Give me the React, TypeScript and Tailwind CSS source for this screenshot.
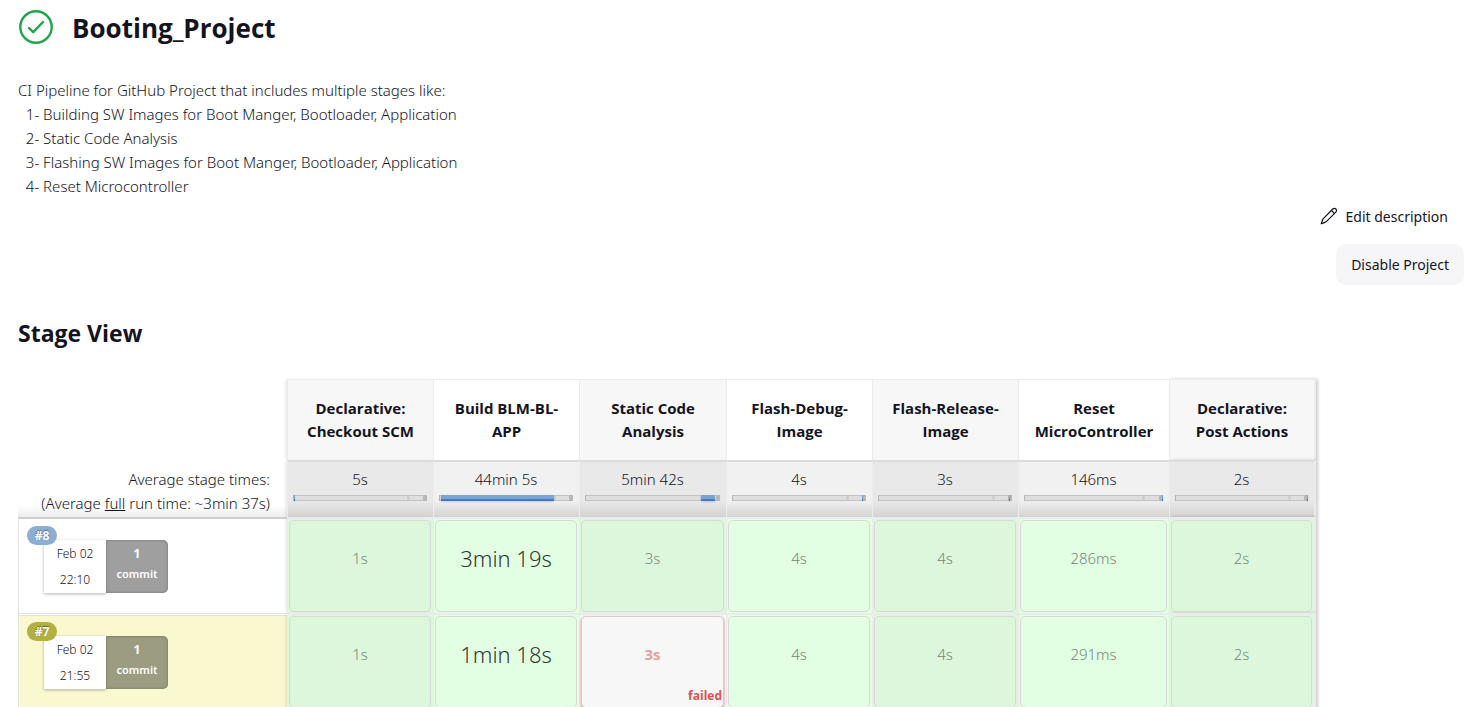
type Bar = { start: number; width: number };
type Stage = { name: [string, string]; width: string; avg: string; bar: Bar };
type Cell = { time: string; kind: 'ok' | 'long' | 'failed' };
type Run = { id: string; date: string; time: string; unstable: boolean; cells: Cell[] };

const stages: Stage[] = [
  { name: ['Declarative:', 'Checkout SCM'], width: 'w-[146px]', avg: '5s', bar: { start: 0, width: 0.8 } },
  { name: ['Build BLM-BL-', 'APP'], width: 'w-[146px]', avg: '44min 5s', bar: { start: 0.5, width: 85 } },
  { name: ['Static Code', 'Analysis'], width: 'w-[147px]', avg: '5min 42s', bar: { start: 86, width: 10.5 } },
  { name: ['Flash-Debug-', 'Image'], width: 'w-[146px]', avg: '4s', bar: { start: 97, width: 0.8 } },
  { name: ['Flash-Release-', 'Image'], width: 'w-[146px]', avg: '3s', bar: { start: 98, width: 0.8 } },
  { name: ['Reset', 'MicroController'], width: 'w-[151px]', avg: '146ms', bar: { start: 99, width: 0.8 } },
  { name: ['Declarative:', 'Post Actions'], width: 'w-[147px]', avg: '2s', bar: { start: 99, width: 0.8 } },
];

const runs: Run[] = [
  {
    id: '#8', date: 'Feb 02', time: '22:10', unstable: false,
    cells: [
      { time: '1s', kind: 'ok' }, { time: '3min 19s', kind: 'long' }, { time: '3s', kind: 'ok' }, { time: '4s', kind: 'ok' },
      { time: '4s', kind: 'ok' }, { time: '286ms', kind: 'ok' }, { time: '2s', kind: 'ok' },
    ],
  },
  {
    id: '#7', date: 'Feb 02', time: '21:55', unstable: true,
    cells: [
      { time: '1s', kind: 'ok' }, { time: '1min 18s', kind: 'long' }, { time: '3s', kind: 'failed' }, { time: '4s', kind: 'ok' },
      { time: '4s', kind: 'ok' }, { time: '291ms', kind: 'ok' }, { time: '2s', kind: 'ok' },
    ],
  },
];

const edge = (i: number) =>
  i === 0
    ? 'shadow-[-2px_0_3px_-1px_rgba(0,0,0,0.12)]'
    : i === stages.length - 1
      ? 'border-r-2 border-r-[#ececec] shadow-[2px_0_3px_rgba(0,0,0,0.2)]'
      : '';

function StageBar({ bar }: { bar: Bar }) {
  return (
    <div className="relative flex h-1.5 w-full border-l border-[#b4b4b4] bg-[#b8b8b8]">
      <div className="w-[85%] border-y border-[#c2c2c2] bg-[#dedede]" />
      <div className="w-[2%] border-y border-[#c2c2c2] bg-[#d0d0d0]" />
      <div className="w-[10%] border-y border-[#c2c2c2] bg-[#dedede]" />
      <div
        className="absolute inset-y-0 min-w-px bg-linear-to-b from-[#7ba5d6] from-60% to-[#4478c8] to-70% shadow-[0_1px_2px_rgba(0,0,0,0.15)]"
        style={{ left: `${bar.start}%`, width: `${bar.width}%` }}
      />
    </div>
  );
}

function StageCell({ cell, shaded, index }: { cell: Cell; shaded: boolean; index: number }) {
  const failed = cell.kind === 'failed';
  const bg = failed ? 'bg-[#f7f7f7]' : shaded ? 'bg-[#ddf7dc]' : 'bg-[#e3ffe3]';
  return (
    <td className={`h-24 border-l border-t-2 border-[#ebebeb] p-0 ${bg} ${edge(index)}`}>
      <div
        className={`relative my-px ml-px mr-0.5 flex h-[92px] items-center justify-center rounded-[5px] border pb-4 ${
          failed ? 'border-[#d9c9c9] shadow-[0_1px_2px_rgba(217,50,50,0.8)]' : 'border-[#d8d8d8]'
        }`}
      >
        {cell.kind === 'long' && <span className="text-[22px] text-[#2f3a35]">{cell.time}</span>}
        {cell.kind === 'ok' && <span className="text-[15px] text-[#75877a]">{cell.time}</span>}
        {failed && (
          <>
            <span className="text-[15px] font-bold text-[#e8a09d]">{cell.time}</span>
            <span className="absolute bottom-0.5 right-px font-['Open_Sans',sans-serif] text-[12px] font-bold leading-[18px] text-[#d9534f]">failed</span>
          </>
        )}
      </div>
    </td>
  );
}

function RunLabel({ run }: { run: Run }) {
  return (
    <th
      scope="row"
      className={`border-l p-0 align-top font-light ${
        run.unstable
          ? 'border-t-[3px] border-double border-[#e2e2e2] bg-[#faf8cf] bg-clip-padding'
          : 'border-t-2 border-[#e2e2e2] border-t-[#cfcfcf] bg-white'
      }`}
    >
      <div className={`relative pl-[25px] ${run.unstable ? 'pt-5' : 'pt-[21px]'}`}>
        <a
          href="#run"
          className={`absolute left-2 flex h-[19px] w-[30px] items-center justify-center rounded-full text-[12px] font-bold text-white [text-shadow:0_-1px_1px_rgba(0,0,0,0.4)] ${
            run.unstable ? 'top-1.5 bg-[#b1b040]' : 'top-[7px] bg-[#8bafd4]'
          }`}
        >
          {run.id}
        </a>
        <div className="flex h-[53px]">
          <div className="flex w-[62px] flex-col items-center justify-center gap-1.5 bg-white text-[12px] leading-5 text-[#14141f] shadow-[0_1px_3px_rgba(0,0,0,0.3)]">
            <span>{run.date}</span>
            <span>{run.time}</span>
          </div>
          <div
            className={`flex w-[62px] flex-col items-center rounded-r-[5px] pt-1 text-[12px] font-semibold leading-5 text-white shadow-[inset_0_0_3px_rgba(0,0,0,0.3)] ${
              run.unstable ? 'bg-[#9c9c80]' : 'bg-[#9f9f9f]'
            }`}
          >
            <span className="font-bold">1</span>
            <span className="text-[11px]">commit</span>
          </div>
        </div>
      </div>
    </th>
  );
}

export default function App() {
  return (
    <main className="h-screen overflow-hidden bg-white pl-[18px] pr-[9px] font-['Noto_Sans','Open_Sans',sans-serif] text-[15px] font-light text-[#14141f]">
      <header className="flex items-start gap-[18px] pt-[9px]">
        <svg viewBox="0 0 36 36" className="size-9" fill="none" stroke="#1ea64b" strokeLinecap="round" strokeLinejoin="round" role="img" aria-label="Success">
          <circle cx="18" cy="18" r="15.7" strokeWidth="2.4" />
          <path d="M11 19l4.2 4.2L25 13" strokeWidth="2.4" />
        </svg>
        <h1 className="font-['Open_Sans',sans-serif] text-[26px] font-bold leading-[38px]">Booting_Project</h1>
      </header>

      <p className="whitespace-pre-wrap pt-[31px] leading-[24px]">
        {`CI Pipeline for GitHub Project that includes multiple stages like:
  1- Building SW Images for Boot Manger, Bootloader, Application
  2- Static Code Analysis
  3- Flashing SW Images for Boot Manger, Bootloader, Application
  4- Reset Microcontroller`}
      </p>

      <div className="flex flex-col items-end gap-2.5 text-[14px] font-normal">
        <a href="#edit" className="flex h-9 items-center gap-2 pr-4">
          <svg viewBox="0 0 512 512" className="size-[18px]" fill="none" stroke="currentColor" strokeLinecap="round" strokeLinejoin="round" strokeWidth="34" aria-hidden="true">
            <path d="M364 58c24-24 62-24 86 0s24 62 0 86L172 422C130 452 80 458 34 478c20-46 26-96 54-140z" />
            <path d="M324 98l86 86" />
          </svg>
          Edit description
        </a>
        <button type="button" className="h-[41px] rounded-[10px] bg-[#f6f6f9] px-[15px]">
          Disable Project
        </button>
      </div>

      <h2 className="pt-8 font-['Open_Sans',sans-serif] text-[23px] font-bold leading-8">Stage View</h2>

      <table className="mt-[30px] w-[1298px] table-fixed border-separate border-spacing-0 text-center">
        <thead>
          <tr>
            <td className="w-[269px]" />
            {stages.map((s, i) => (
              <th
                key={s.avg}
                scope="col"
                className={`h-[81px] border-l border-t border-[#ececec] p-0 font-['Open_Sans',sans-serif] text-[15px] font-bold leading-[23px] ${s.width} ${i % 2 ? 'bg-white' : 'bg-[#f7f7f7]'} ${edge(i)}`}
              >
                {s.name[0]}
                <br />
                {s.name[1]}
              </th>
            ))}
          </tr>
        </thead>
        <tbody>
          <tr>
            <th scope="row" className="bg-linear-to-b from-white from-80% to-[#ededed] p-0 pr-[17px] pt-1 text-right font-light leading-6">
              Average stage times:
              <br />
              (Average <u>full</u> run time: ~3min 37s)
            </th>
            {stages.map((s, i) => (
              <td
                key={s.avg}
                className={`h-[57px] border-l border-t-2 border-[#ececec] border-t-[#dcdcdc] bg-linear-to-b from-70% to-[#d3d3d3] px-1.5 pb-4 pl-[5px] pt-[5px] align-top leading-6 ${
                  i % 2 ? 'from-[#f1f1f1]' : 'from-[#e9e9e9]'
                } ${edge(i)}`}
              >
                <div className="pb-1">{s.avg}</div>
                <StageBar bar={s.bar} />
              </td>
            ))}
          </tr>
          {runs.map((run) => (
            <tr key={run.id}>
              <RunLabel run={run} />
              {run.cells.map((cell, i) => (
                <StageCell key={i} cell={cell} shaded={i % 2 === 0} index={i} />
              ))}
            </tr>
          ))}
        </tbody>
      </table>
    </main>
  );
}
